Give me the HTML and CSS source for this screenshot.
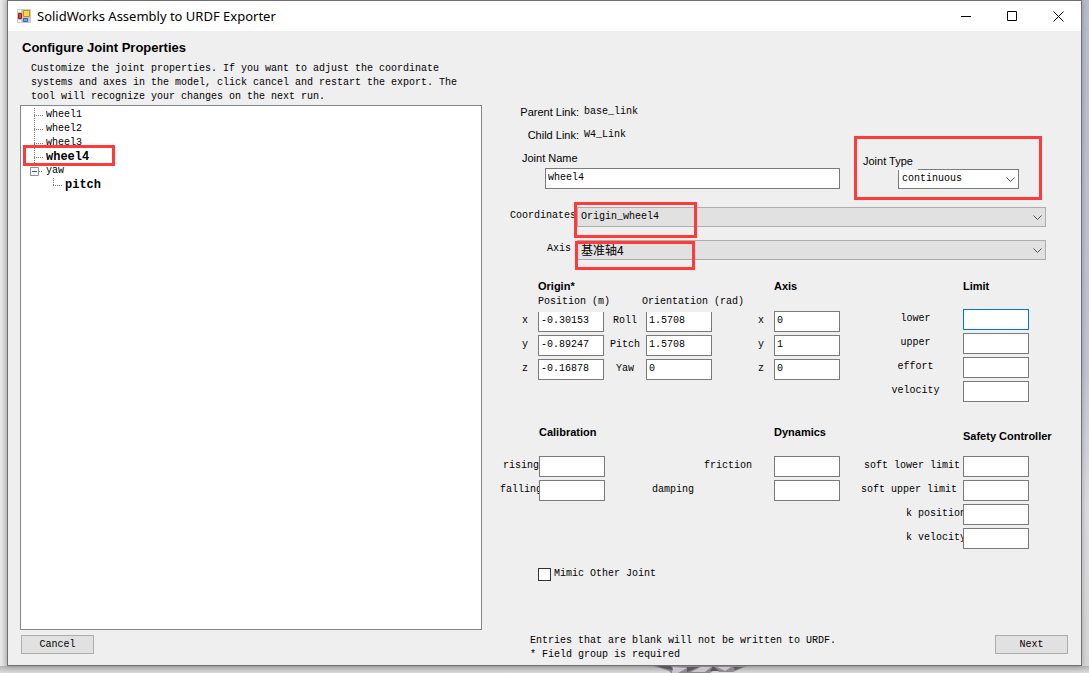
FILE: index.html
```html
<!DOCTYPE html>
<html lang="en">
<head>
<meta charset="utf-8">
<title>SolidWorks Assembly to URDF Exporter</title>
<link rel="stylesheet" href="styles.css">
</head>
<body>
<svg class="backdrop-model" width="94" height="7" viewBox="0 0 94 7" aria-hidden="true">
  <path d="M0 0h94L80 6H66l-3-3-6 4H18l-2-2z" fill="#8e8990"/>
  <path d="M20 1l14 1-9 5h-6zM48 1h10l-6 5H38zM64 1h14l-6 4z" fill="#c9c6cb"/>
  <path d="M2 0h16l2 4-6-1zM34 1l12 0-12 5zM60 0l6 5h-9zM80 1l10 0-8 3z" fill="#5c565f"/>
</svg>
<div class="window">
  <header class="titlebar">
    <svg width="14" height="14" viewBox="0 0 14 14" aria-hidden="true">
      <path d="M0 0h14v14H0z" fill="#c9c9cd"/>
      <path d="M1 1h3v2H1zM1 11h3v2H1z" fill="#f6f6f6"/>
      <path d="M1.500 4.500h3v5h-3z" fill="#e0483a" stroke="#9c1c16"/>
      <path d="M6.500 1.500h6v6h-6z" fill="#fdd64b" stroke="#c18a12"/>
      <path d="M6.500 9.500h4v3h-4z" fill="#6aa4f4" stroke="#2d62c0"/>
    </svg>
    <h1>SolidWorks Assembly to URDF Exporter</h1>
    <div class="caption-buttons">
      <button type="button" aria-label="Minimize"><svg width="11" height="11" viewBox="0 0 11 11"><path d="M0 5.500h10"/></svg></button>
      <button type="button" aria-label="Maximize"><svg width="11" height="11" viewBox="0 0 11 11"><path d="M.5.5h9v9h-9z"/></svg></button>
      <button type="button" aria-label="Close"><svg width="11" height="11" viewBox="0 0 11 11"><path d="M.5.5l10 10M10.500.5l-10 10"/></svg></button>
    </div>
  </header>

  <main class="content">
    <section class="tree-pane">
      <h2 class="page-title">Configure Joint Properties</h2>
      <p class="intro">Customize the joint properties. If you want to adjust the coordinate<br>systems and axes in the model, click cancel and restart the export. The<br>tool will recognize your changes on the next run.</p>
      <div class="tree">
        <ul>
          <li><i class="branch"></i>wheel1</li>
          <li><i class="branch"></i>wheel2</li>
          <li><i class="branch"></i>wheel3</li>
          <li class="marked"><i class="branch"></i><b>wheel4</b><span class="mark mark-tree"></span></li>
          <li class="parent"><svg width="9" height="9" viewBox="0 0 9 9" aria-hidden="true"><path d="M.5.5h8v8h-8z" fill="#f6f6f6" stroke="#919191"/><path d="M2 4.500h5" stroke="#3c55a5"/></svg><i class="stub"></i>yaw</li>
          <li class="child"><i class="branch last"></i><b>pitch</b></li>
        </ul>
      </div>
    </section>

    <form class="form-pane">
      <div class="link-row"><span class="link-label sans">Parent Link:</span><span>base_link</span></div>
      <div class="link-row"><span class="link-label sans">Child Link:</span><span>W4_Link</span></div>

      <div class="joint-row">
        <div class="joint-name">
          <label class="sans" for="joint-name">Joint Name</label>
          <input id="joint-name" type="text" value="wheel4">
        </div>
        <div class="joint-type marked">
          <label class="sans" for="joint-type">Joint Type</label>
          <div class="combo light">
            <select id="joint-type"><option>continuous</option></select>
            <svg class="chevron" width="9" height="5" viewBox="0 0 9 5" aria-hidden="true"><path d="M.5.5l4 4 4-4"/></svg>
          </div>
          <span class="mark mark-type"></span>
        </div>
      </div>

      <div class="combo-row">
        <label for="coordinates">Coordinates</label>
        <div class="combo marked">
          <select id="coordinates"><option>Origin_wheel4</option></select>
          <svg class="chevron" width="9" height="5" viewBox="0 0 9 5" aria-hidden="true"><path d="M.5.5l4 4 4-4"/></svg>
          <span class="mark mark-coordinates"></span>
        </div>
      </div>
      <div class="combo-row second">
        <label class="gap-m" for="axis">Axis</label>
        <div class="combo marked">
          <select id="axis" class="cjk"><option>基准轴4</option></select>
          <svg class="chevron" width="9" height="5" viewBox="0 0 9 5" aria-hidden="true"><path d="M.5.5l4 4 4-4"/></svg>
          <span class="mark mark-axis"></span>
        </div>
      </div>

      <div class="groups geometry">
        <section class="group">
          <h3 class="origin-title">Origin*</h3>
          <div class="fields origin-fields">
            <span class="sub position">Position (m)</span><span class="sub orientation">Orientation (rad)</span>
            <label class="gap-l" for="px">x</label><input id="px" type="text" value="-0.30153">
            <label class="centered" for="roll">Roll</label><input id="roll" type="text" value="1.5708">
            <label class="gap-l" for="py">y</label><input id="py" type="text" value="-0.89247">
            <label class="centered" for="pitch">Pitch</label><input id="pitch" type="text" value="1.5708">
            <label class="gap-l" for="pz">z</label><input id="pz" type="text" value="-0.16878">
            <label class="centered" for="yaw">Yaw</label><input id="yaw" type="text" value="0">
          </div>
        </section>
        <section class="group">
          <div class="fields axis-fields">
            <h3>Axis</h3>
            <label class="gap-l" for="ax">x</label><input id="ax" type="text" value="0">
            <label class="gap-l" for="ay">y</label><input id="ay" type="text" value="1">
            <label class="gap-l" for="az">z</label><input id="az" type="text" value="0">
          </div>
        </section>
        <section class="group">
          <div class="fields limit-fields">
            <h3>Limit</h3>
            <label class="centered" for="lower">lower</label><input id="lower" class="active" type="text">
            <label class="centered" for="upper">upper</label><input id="upper" type="text">
            <label class="centered" for="effort">effort</label><input id="effort" type="text">
            <label class="centered" for="velocity">velocity</label><input id="velocity" type="text">
          </div>
        </section>
      </div>

      <div class="groups physics">
        <section class="group">
          <div class="fields calibration-fields">
            <h3>Calibration</h3>
            <label for="rising">rising</label><input id="rising" type="text">
            <label class="tight" for="falling">falling</label><input id="falling" type="text">
          </div>
        </section>
        <section class="group">
          <div class="fields dynamics-fields">
            <h3>Dynamics</h3>
            <label class="friction" for="friction">friction</label><input id="friction" type="text">
            <label class="damping" for="damping">damping</label><input id="damping" type="text">
          </div>
        </section>
        <section class="group">
          <div class="fields safety-fields">
            <h3>Safety Controller</h3>
            <label class="gap-s" for="soft-lower">soft lower limit</label><input id="soft-lower" type="text">
            <label class="gap-m" for="soft-upper">soft upper limit</label><input id="soft-upper" type="text">
            <label class="tight" for="k-position">k position</label><input id="k-position" type="text">
            <label class="tight" for="k-velocity">k velocity</label><input id="k-velocity" type="text">
          </div>
        </section>
      </div>

      <div class="mimic"><input id="mimic" type="checkbox"><label for="mimic">Mimic Other Joint</label></div>
    </form>
  </main>

  <footer class="footer">
    <div><button class="push" type="button">Cancel</button></div>
    <div class="footer-right">
      <p>Entries that are blank will not be written to URDF.<br>* Field group is required</p>
      <button class="push" type="button">Next</button>
    </div>
  </footer>
</div>
</body>
</html>
```
FILE: styles.css
```css
* { box-sizing: border-box; }

body {
  margin: 0;
  min-height: 100vh;
  display: flex;
  padding: 0 7px 7px;
  position: relative;
  overflow: hidden;
  color: #000;
  font: 10px/14px "Liberation Mono", "Noto Sans CJK SC", monospace;
  background:
    linear-gradient(to bottom, #b4b4b4, #dcdcdc) bottom / 100% 7px no-repeat,
    linear-gradient(to right, #ececec, #d2d2d4) left / 7px 100% no-repeat,
    linear-gradient(to bottom, #b9bccb, #c3c4d2 55%, #dcdcdf 75%, #d6d6d6) right / 7px 100% no-repeat;
}

h1, h2, h3, p, ul { margin: 0; padding: 0; font-weight: normal; }
button, input, select { font: inherit; color: inherit; border-radius: 0; }
.sans { font-family: "Liberation Sans", Arial, sans-serif; font-size: 11px; }

.backdrop-model { position: absolute; left: 60%; bottom: 0; }

.window {
  flex: 1;
  display: flex;
  flex-direction: column;
  border: 1px solid #707072;
  background: #efefef;
  box-shadow: 0 0 6px rgba(0, 0, 0, .25);
}

.titlebar {
  display: flex;
  align-items: center;
  height: 30px;
  padding-left: 9px;
  background: #fff;
}
.titlebar h1 {
  flex: 1;
  margin-left: 6px;
  font: 13px/20px "Noto Sans", sans-serif;
}
.caption-buttons { display: flex; }
.caption-buttons button {
  display: grid;
  place-items: center;
  width: 46px;
  height: 30px;
  padding: 0;
  border: 0;
  background: none;
}
.caption-buttons path { fill: none; stroke: #000; }

.content, .footer {
  display: grid;
  grid-template-columns: minmax(0, 474fr) minmax(0, 599fr);
}
.content { flex: 1; }

.tree-pane {
  display: flex;
  flex-direction: column;
  padding: 8px 0 0 12px;
}
.page-title {
  padding-left: 2px;
  font: bold 13px/18px "Liberation Sans", Arial, sans-serif;
}
.intro { padding: 5px 0 1px 11px; white-space: nowrap; }
.tree {
  flex: 1;
  border: 1px solid #828790;
  background: #fff;
}
.tree ul { padding: 2px 0 0 13px; list-style: none; }
.tree li { display: flex; height: 14px; }
.tree b { font-size: 12px; }
.branch, .stub {
  width: 9px;
  margin-right: 3px;
  background:
    repeating-linear-gradient(to bottom, #808080 0 1px, transparent 1px 2px) 0 0 / 1px 100% no-repeat,
    repeating-linear-gradient(to right, #808080 0 1px, transparent 1px 2px) 0 7px / 100% 1px no-repeat;
}
.branch.last { background-size: 1px 8px, 100% 1px; }
.stub { width: 4px; background-size: 0 0, 100% 1px; }
.tree .parent { margin-left: -4px; }
.parent svg { margin: 3px 0 0; }
.tree .child { padding-left: 19px; }

.marked { position: relative; }
.mark {
  position: absolute;
  z-index: 3;
  border: 3px solid #ff3a38;
  pointer-events: none;
}
.mark-tree { left: -11px; top: -5px; width: 92px; height: 21px; }
.mark-type { inset: -16px -23px -11px -9px; }
.mark-coordinates { left: -3px; top: -5px; width: 123px; height: 36px; }
.mark-axis { left: -2px; top: 1px; width: 120px; height: 29px; }

.form-pane { padding: 74px 35px 0 18px; }

.link-row { display: flex; gap: 5px; margin-bottom: 9px; }
.link-label { width: 79px; text-align: right; }

input[type="text"] {
  position: relative;
  z-index: 1;
  width: 100%;
  min-width: 0;
  height: 21px;
  padding: 0 2px 2px;
  border: 1px solid #7a7a7a;
  background: #fff;
  outline: 0;
}
input[type="text"].active { border-color: #0078d7; }

.joint-row {
  display: flex;
  align-items: flex-end;
  justify-content: space-between;
  padding: 0 27px 0 22px;
}
.joint-name { width: 64%; }
.joint-name label { display: block; margin-bottom: 3px; }
.joint-name input { margin-left: 23px; width: calc(100% - 23px); display: block; }
.joint-type { display: flex; flex-direction: column; }
.joint-type label {
  position: relative;
  z-index: 2;
  align-self: flex-start;
  margin-bottom: -1px;
  padding-right: 5px;
  line-height: 18px;
  background: #efefef;
}
.joint-type .combo { margin-left: 35px; width: 121px; }

.combo { position: relative; flex: 1; }
.combo select {
  display: block;
  appearance: none;
  width: 100%;
  height: 20px;
  padding: 0 16px 0 3px;
  border: 1px solid #adadad;
  background: #e1e1e1;
}
.combo.light select { border-color: #7a7a7a; background: #fff; }
.combo select.cjk { font: 12px/16px "Noto Sans CJK SC", sans-serif; }
.chevron { position: absolute; right: 4px; top: 8px; pointer-events: none; }
.chevron path { fill: none; stroke: #505050; }

.combo-row { display: flex; margin-top: 18px; }
.combo-row.second { margin-top: 13px; }
.combo-row label { width: 77px; padding: 2px 1px 0 0; text-align: right; }

.groups {
  display: grid;
  align-items: start;
  margin-right: 17px;
}
.geometry { grid-template-columns: 212fr 128fr 189fr; margin-top: 18px; }
.physics { grid-template-columns: 105fr 235fr 189fr; margin-top: 22px; }
.group { min-width: 0; }

h3 {
  font: bold 11px/16px "Liberation Sans", Arial, sans-serif;
  white-space: nowrap;
}
.fields { display: grid; row-gap: 3px; }
.fields h3 { grid-column: 2; min-width: 0; width: 0; }
.fields label { min-width: 0; text-align: right; line-height: 20px; white-space: nowrap; }
.fields .centered { text-align: center; }
.gap-s { padding-right: 3px; }
.fields .gap-l { padding-right: 10px; }
.fields .gap-m, .combo-row .gap-m { padding-right: 6px; }
.fields .tight { margin-right: -3px; }

.origin-title { padding-left: 38px; }
.origin-fields {
  grid-template-columns: minmax(0, 38fr) minmax(0, 66fr) minmax(0, 42fr) minmax(0, 66fr);
  margin-top: 1px;
}
.sub {
  position: relative;
  z-index: 2;
  height: 17px;
  margin-bottom: -4px;
  background: #efefef;
  white-space: nowrap;
}
.position { grid-column: 2; }
.orientation { grid-column: 3 / 5; margin-left: 38px; }
.axis-fields { grid-template-columns: 62fr 66fr; }
.axis-fields h3 { margin-bottom: 14px; }
.limit-fields, .safety-fields { grid-template-columns: minmax(0, 123fr) minmax(0, 66fr); }
.limit-fields h3 { margin-bottom: 12px; }
.limit-fields label { padding-left: 28px; }
.calibration-fields { grid-template-columns: minmax(0, 39fr) minmax(0, 66fr); }
.dynamics-fields { grid-template-columns: minmax(0, 169fr) minmax(0, 66fr); }
.calibration-fields h3, .dynamics-fields h3 { margin-bottom: 13px; }
.safety-fields h3 { margin: 4px 0 9px; }
.friction { padding-right: 22px; }
.damping { padding-right: 80px; }

.mimic {
  display: flex;
  align-items: center;
  gap: 3px;
  margin: 18px 0 0 38px;
}
.mimic input {
  appearance: none;
  width: 13px;
  height: 13px;
  margin: 0;
  border: 1px solid #333;
  background: #fff;
}
.mimic input:checked { box-shadow: inset 0 0 0 2px #fff; background: #333; }

.footer { padding: 4px 0 3px; }
.footer > :first-child { padding-left: 13px; }
.footer-right {
  display: flex;
  justify-content: space-between;
  padding: 0 13px 0 48px;
}
.push {
  width: 73px;
  height: 19px;
  margin-top: 1px;
  padding: 0;
  border: 1px solid #adadad;
  background: #e1e1e1;
}
```
